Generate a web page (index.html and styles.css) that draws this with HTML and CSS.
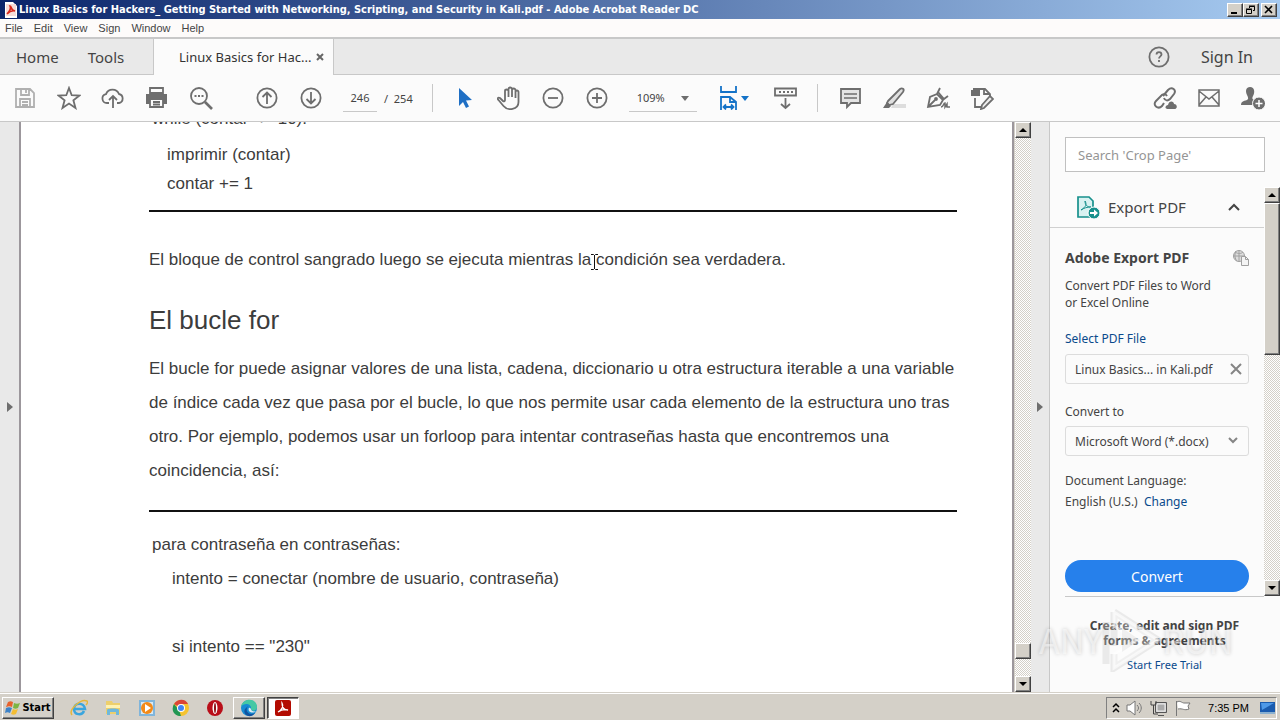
FILE: index.html
```html
<!DOCTYPE html>
<html lang="en">
    <head>
        <meta charset="utf-8">
        <title>Linux Basics for Hackers - Adobe Acrobat Reader DC</title>
        <link rel="stylesheet" href="styles.css">
    </head>
    <body>
        <header class="titlebar">
            <svg class="app-icon" width="12" height="16" viewBox="0 0 12 16"><path d="M0 0h8l4 4v12H0z" fill="#fff"/><path d="M1 2h10v12H1z" fill="#f6dcd8"/><path d="M2 12C5 9 6 6 5 4c2 0 0 4 5 5-3-1-5 0-8 3z" fill="none" stroke="#d8281c" stroke-width="1.6"/></svg>
            <h1>Linux Basics for Hackers_ Getting Started with Networking, Scripting, and Security in Kali.pdf - Adobe Acrobat Reader DC</h1>
            <div class="window-buttons">
                <button class="bevel" aria-label="Minimize"><svg width="12" height="10"><path d="M2 7h6v2H2z"/></svg></button>
                <button class="bevel" aria-label="Restore"><svg width="12" height="10"><path d="M4.500 3V1.500h5v4H8M4 1h6M1.500 4.500h5v4h-5zM1 4h6" fill="none" stroke="#000"/></svg></button>
                <button class="bevel close" aria-label="Close"><svg width="12" height="10"><path d="M2 1l7 7M9 1L2 8" stroke="#000" stroke-width="1.600"/></svg></button>
            </div>
        </header>

        <nav class="menubar">
            <button>File</button>
            <button>Edit</button>
            <button>View</button>
            <button>Sign</button>
            <button>Window</button>
            <button>Help</button>
        </nav>

        <div class="tabs">
            <div class="tabs-left">
                <button>Home</button>
                <button>Tools</button>
            </div>
            <div class="tab-active">
                <span>Linux Basics for Hac...</span>
                <button aria-label="Close tab"><svg width="8" height="8" viewBox="0 0 8 8"><path d="M1 1l6 6M7 1L1 7" stroke="#666" stroke-width="2"/></svg></button>
            </div>
            <div class="tabs-right">
                <button aria-label="Help"><svg width="22" height="22" viewBox="0 0 22 22" fill="none" stroke="#6e6e6e" stroke-width="1.800"><circle cx="11" cy="11" r="9.600"/><path d="M8.500 8.500c0-3.300 5-3.300 5 0 0 1.800-2.500 2-2.500 4M11 14v2"/></svg></button>
                <button class="sign-in">Sign In</button>
            </div>
        </div>

        <div class="toolbar">
            <div class="tools">
                <button aria-label="Save"><svg class="faded" viewBox="0 0 24 24"><path d="M3 3h14l4 4v14H3zM8 3v6h8V3M13 4v3M7 21v-8h10v8M9 16h6M9 19h6"/></svg></button>
                <button aria-label="Star"><svg viewBox="0 0 24 24"><path d="M12 2l2.700 7.200 7.800.3-6.100 4.800 2.100 7.700-6.500-4.400L5.500 22l2.100-7.700L1.500 9.500l7.800-.3z"/></svg></button>
                <button aria-label="Upload"><svg viewBox="0 0 24 24"><path d="M8 17H6a4.500 4.500 0 0 1-1-8.900A7 7 0 0 1 18 8a4.600 4.600 0 0 1 0 9h-2M12 22V11M8 14l4-4 4 4"/></svg></button>
                <button aria-label="Print"><svg viewBox="0 0 24 24"><path d="M5 2h13v5H5z" fill="#fbfbfb"/><path d="M1 8h21v10h-4v-4H5v4H1z" fill="#6e6e6e" stroke="none"/><path d="M5 13h13v8H5zM8 16h7M8 18.500h7" fill="#fbfbfb"/></svg></button>
                <button aria-label="Find"><svg viewBox="0 0 24 24"><circle cx="10" cy="10" r="8"/><path d="M16 16l7 7" stroke-width="2.600"/><path d="M5.500 10h2m1.500 0h2m1.500 0h2"/></svg></button>
            </div>
            <div class="tools pages">
                <button aria-label="Previous page"><svg viewBox="0 0 24 24"><circle cx="12" cy="12" r="9.600"/><path d="M12 18V7M7.500 11L12 6.500l4.500 4.500"/></svg></button>
                <button aria-label="Next page"><svg viewBox="0 0 24 24"><circle cx="12" cy="12" r="9.600"/><path d="M12 6v11M7.500 13l4.500 4.500 4.500-4.500"/></svg></button>
                <input class="page-number" type="text" value="246" aria-label="Page number">
                <span>/&nbsp; 254</span>
            </div>
            <div class="tools view">
                <button aria-label="Select"><svg viewBox="0 0 24 24"><path d="M6 2l13 12-6 .5 3 6-3 1.500-3-6-4 4z" fill="#1f6fc4" stroke="none"/></svg></button>
                <button aria-label="Hand"><svg viewBox="0 0 24 24" stroke-width="1.500"><path d="M6 15L3 12c-2-1-3 .5-1.500 2l5 6c4 5 15 4 15-4V6c0-2-3-2-3 0v6V4c0-2-3.500-2-3.500 0v7V3c0-2-3.500-2-3.500 0v8V5c0-2-3.500-2-3.500 0v9c0 1-1 2-2 1"/></svg></button>
                <button aria-label="Zoom out"><svg viewBox="0 0 24 24"><circle cx="12" cy="12" r="9.600"/><path d="M7 12h10"/></svg></button>
                <button aria-label="Zoom in"><svg viewBox="0 0 24 24"><circle cx="12" cy="12" r="9.600"/><path d="M7 12h10M12 7v10"/></svg></button>
                <div class="zoom">
                    <select aria-label="Zoom"><option>109%</option></select>
                    <svg class="caret" viewBox="0 0 8 5"><path d="M0 0h8L4 5z"/></svg>
                </div>
                <button class="fit" aria-label="Fit width">
                    <svg class="blue" viewBox="0 0 24 24"><path d="M4 0v6h15V0M4 24V11h9l6 5v8M13 11v5h6M7 21h9M9 18.500L6.500 21 9 23.500M14 18.500l2.500 2.500-2.500 2.500"/></svg>
                    <svg class="caret blue-caret" viewBox="0 0 8 5"><path d="M0 0h8L4 5z"/></svg>
                </button>
                <button aria-label="Keyboard"><svg viewBox="0 0 24 24"><path d="M2 2.500h21v7H2zM12.500 12v10M8 18l4.500 4 4.500-4"/><path d="M6 6h14" stroke-dasharray="2 2"/></svg></button>
            </div>
            <div class="tools comments">
                <button aria-label="Comment"><svg viewBox="0 0 24 24"><path d="M3 3h19v14h-9l-4 4v-4H3z" fill="#e4e4e4"/><path d="M6 8h13M6 12h13" stroke-width="1.300"/></svg></button>
                <button aria-label="Highlight"><svg viewBox="0 0 24 24"><path d="M11 18h13v4H9z" fill="#ddd" stroke="none"/><path d="M6 15L18 3c2-1.500 5 0 3 3L11 18l-4 1-2-2z" fill="#e0e0e0"/><path d="M5 16l4 4-2 2H1z" fill="#6e6e6e" stroke="none"/></svg></button>
                <button aria-label="Sign"><svg viewBox="0 0 24 24"><path d="M2 21L4 11l7-3 6 6-3 5zM11 8l3-6M12 6l6 7 4-3M2 21l7-7"/><circle cx="10" cy="13" r="1"/><path d="M15 21c3 0 2-4 4-4v4l2-3v3h3" stroke-width="1.500"/></svg></button>
                <button aria-label="Edit page"><svg viewBox="0 0 24 24"><path d="M1 4h2V2h7v8H1z" fill="#6e6e6e" stroke="none"/><path d="M5 12v9h6M10 3h5l5 5v2M14 3v5h6"/><path d="M12 19l8-9 3 3-9 9-3 1z" fill="#eee"/></svg></button>
            </div>
            <div class="tools share">
                <button aria-label="Share link"><svg viewBox="0 0 24 24"><path d="M10 10l5-6c4-4 9 0 6 4l-4 5c-2 2-5 2-6-1M14 10c-2-3-5-2-6 0l-5 5c-4 4 2 9 6 5l2-3" stroke-width="2"/><path d="M14 23c-3-1-1-4 1-4 1-5 6-4 6-1 3 0 4 4 1 5z" fill="#6e6e6e" stroke="none"/></svg></button>
                <button aria-label="Email"><svg viewBox="0 0 24 24"><path d="M2 4h20v16H2zM2 5l10 8 10-8M2 19l7-8M22 19l-7-8" stroke-width="1.500"/></svg></button>
                <button aria-label="Add person"><svg viewBox="0 0 24 24"><path d="M9 1c5 0 5 6 3 9-1 2-1 3 1 4l1 5H0c0-3 2-4 6-5 2-1 1-3 0-5-2-4-1-8 3-8z" fill="#6e6e6e" stroke="none"/><circle cx="18" cy="17.500" r="6.500" fill="#6e6e6e" stroke="#fbfbfb" stroke-width="1"/><path d="M14.500 17.500h7M18 14v7" stroke="#fff" stroke-width="1.500"/></svg></button>
            </div>
        </div>

        <main class="workspace">
            <button class="side-strip left" aria-label="Show navigation pane"><svg width="6" height="10"><path d="M0 0l6 5-6 5z" fill="#6e6e6e"/></svg></button>
            <article class="document">
                <div class="code code-first">
                    <p class="cut">while (contar &lt;= 10):</p>
                    <p>imprimir (contar)</p>
                    <p>contar += 1</p>
                </div>
                <p class="text">El bloque de control sangrado luego se ejecuta mientras la condición sea verdadera.</p>
                <h2>El bucle for</h2>
                <p class="text">El bucle for puede asignar valores de una lista, cadena, diccionario u otra estructura iterable a una variable<br>
                de índice cada vez que pasa por el bucle, lo que nos permite usar cada elemento de la estructura uno tras<br>
                otro. Por ejemplo, podemos usar un forloop para intentar contraseñas hasta que encontremos una<br>
                coincidencia, así:</p>
                <div class="code code-second">
                    <p class="outer">para contraseña en contraseñas:</p>
                    <p>intento = conectar (nombre de usuario, contraseña)</p>
                    <p>&nbsp;</p>
                    <p>si intento == "230"</p>
                </div>
                <svg class="cursor" width="9" height="16" viewBox="0 0 9 16"><path d="M1 .5h2.500l1 1 1-1H8M4.500 1v14M1 15.500h2.500l1-1 1 1H8" fill="none" stroke="#111"/></svg>
            </article>
            <div class="scrollbar doc-scroll">
                <button class="bevel" aria-label="Scroll up"><svg width="8" height="4"><path d="M0 4l4-4 4 4z"/></svg></button>
                <div class="track"></div>
                <div class="bevel thumb"></div>
                <div class="track-end"></div>
                <button class="bevel" aria-label="Scroll down"><svg width="8" height="4"><path d="M0 0h8L4 4z"/></svg></button>
            </div>
            <button class="side-strip right" aria-label="Hide tools pane"><svg width="6" height="10"><path d="M0 0l6 5-6 5z" fill="#6e6e6e"/></svg></button>

            <aside class="panel">
                <input class="search" type="text" placeholder="Search 'Crop Page'" aria-label="Search tools">
                <div class="panel-body">
                    <div class="panel-content">
                        <button class="export-head">
                            <svg width="24" height="24" viewBox="0 0 24 24"><path d="M2 2h11l4 4v16H2z" fill="#d9f2f1" stroke="#17908c" stroke-width="1.700"/><path d="M5 15c5-3 6-6 4-9 0 4 2 6 6 6-4 0-7 1-10 3z" fill="none" stroke="#17908c"/><circle cx="18" cy="18" r="6" fill="#17908c" stroke="#fff"/><path d="M14 17h4v-2.500l4 3.500-4 3.500V19h-4z" fill="#fff"/></svg>
                            <span>Export PDF</span>
                            <svg width="12" height="8" viewBox="0 0 12 8"><path d="M1 7l5-5 5 5" fill="none" stroke="#444" stroke-width="2"/></svg>
                        </button>
                        <div class="export">
                            <h3>Adobe Export PDF
                                <svg width="16" height="16" viewBox="0 0 16 16" fill="none" stroke="#a0a0a0"><circle cx="6" cy="6" r="5.500" fill="#ddd"/><path d="M6 0v12M0 6h12M2 2c3 2 6 2 8 0M3 1c-2 4-1 8 1 10"/><path d="M8.500 6.500h4l3 3v6h-7z" fill="#f4f4f4"/><path d="M12.500 6.500v3h3"/></svg>
                            </h3>
                            <p class="about">Convert PDF Files to Word<br>or Excel Online</p>
                            <a href="#">Select PDF File</a>
                            <div class="file">
                                <span>Linux Basics... in Kali.pdf</span>
                                <button aria-label="Remove file"><svg width="12" height="12"><path d="M1 1l10 10M11 1L1 11" stroke="#858585" stroke-width="2"/></svg></button>
                            </div>
                            <label for="format">Convert to</label>
                            <div class="format">
                                <select id="format"><option>Microsoft Word (*.docx)</option></select>
                                <svg width="10" height="7"><path d="M1 1l4 4 4-4" fill="none" stroke="#858585" stroke-width="2"/></svg>
                            </div>
                            <p class="language">Document Language:<br>English (U.S.) &nbsp;<a href="#">Change</a></p>
                            <button class="convert">Convert</button>
                        </div>
                    </div>
                    <div class="scrollbar">
                        <button class="bevel" aria-label="Scroll up"><svg width="8" height="4"><path d="M0 4l4-4 4 4z"/></svg></button>
                        <div class="bevel thumb"></div>
                        <div class="track"></div>
                        <button class="bevel" aria-label="Scroll down"><svg width="8" height="4"><path d="M0 0h8L4 4z"/></svg></button>
                    </div>
                </div>
                <div class="trial">
                    <strong>Create, edit and sign PDF<br>forms &amp; agreements</strong>
                    <a href="#">Start Free Trial</a>
                </div>
                <div class="watermark">
                    <span>ANY</span>
                    <svg width="60" height="64" viewBox="0 0 60 64"><path d="M12 4l44 28-44 28V46M12 38V4M4 14v42" fill="none" stroke="#ccc" stroke-width="7" stroke-opacity=".35"/><path d="M12 4l44 28-44 28V46l22-14-22-14z" fill="#fff" fill-opacity=".3" stroke="#fff" stroke-width="3" stroke-opacity=".6"/><path d="M20 20l18 12-18 12z" fill="#ddd" fill-opacity=".4"/></svg>
                    <span>RUN</span>
                </div>
            </aside>
        </main>

        <footer class="taskbar">
            <button class="bevel start">
                <svg width="16" height="16" viewBox="0 0 16 16"><path d="M3 2c2-1 3-1 5 0L7 7C5 6 4 6 1 7z" fill="#e8622c"/><path d="M9 3c2 1 4 1 6 0l-2 5c-2 1-3 1-5 0z" fill="#7db542"/><path d="M1 8c2-1 4-1 6 0l-2 5c-2-1-3-1-5 0z" fill="#3c82c8"/><path d="M8 9c2 1 3 1 5 0l-2 5c-2 1-3 1-5 0z" fill="#f4bd32"/></svg>
                Start
            </button>
            <div class="quick">
                <button aria-label="Internet Explorer"><svg width="18" height="18" viewBox="0 0 18 18" fill="none"><path d="M14 12c-2 5-10 4-10-2 0-7 10-7 11 0H5" stroke="#39a5de" stroke-width="2.500"/><path d="M2 16C-2 11 11-1 17 2c1 1 0 3-1 4" stroke="#e5b73b" stroke-width="1.500"/></svg></button>
                <button aria-label="Explorer"><svg width="18" height="18" viewBox="0 0 18 18"><path d="M2 2h6l1 2h7v11H2z" fill="#edcf6c"/><path d="M2 6h14v3H2z" fill="#fff2b0"/><path d="M3 16v-5c0-2 12-2 12 0v5h-3v-3H6v3z" fill="#70b8db"/></svg></button>
                <button aria-label="Media Player"><svg width="18" height="18" viewBox="0 0 18 18"><path d="M1 1h16v16H1z" fill="#80b5db"/><path d="M3 3h12v12H3z" fill="#d8e9f4"/><circle cx="9" cy="9" r="6" fill="#f28a19"/><path d="M7 5l6 4-6 4z" fill="#fff"/></svg></button>
                <button aria-label="Chrome"><svg width="18" height="18" viewBox="0 0 18 18"><circle cx="9" cy="9" r="8" fill="#f5c330"/><path d="M9 9L2 5c4-6 12-5 14 0H9z" fill="#db4437"/><path d="M2 5l5 6 2 6C1 17-1 10 2 5z" fill="#219653"/><circle cx="9" cy="9" r="4" fill="#fff"/><circle cx="9" cy="9" r="3" fill="#4285f4"/></svg></button>
                <button aria-label="Opera"><svg width="18" height="18" viewBox="0 0 18 18"><circle cx="9" cy="9" r="8" fill="#b90e19"/><ellipse cx="9" cy="9" rx="2.500" ry="6" fill="#fff"/><ellipse cx="9" cy="9" rx="1" ry="5" fill="#8e1419"/></svg></button>
            </div>
            <button class="bevel task" aria-label="Edge"><svg width="18" height="18" viewBox="0 0 18 18"><circle cx="9" cy="9" r="8" fill="#168bd2"/><path d="M1 8C3-2 17-1 17 8c0 4-5 5-6 2 1-5-7-7-10-2z" fill="#45c8a4"/><path d="M8 7c-4 6 2 10 7 7-5 7-13 1-10-4z" fill="#10539f"/><path d="M11 10c-2-3-3 0-2 2 2 2 5 2 7 0-2 1-5 0-5-2z" fill="#dcecf2"/></svg></button>
            <button class="bevel task active" aria-label="Acrobat Reader"><svg width="18" height="18" viewBox="0 0 18 18"><rect x="1" y="1" width="16" height="16" rx="2" fill="#b30b00"/><path d="M4 13c4-2 6-6 4-9 0 5 2 7 6 7-4-1-7 0-10 2z" fill="none" stroke="#fff" stroke-width="1.300"/></svg></button>
            <div class="tray">
                <svg width="8" height="12" viewBox="0 0 8 12"><path d="M1 5l3-3 3 3M1 10l3-3 3 3" fill="none" stroke="#000" stroke-width="1.500"/></svg>
                <svg width="18" height="16" viewBox="0 0 18 16" fill="none" stroke="#777"><path d="M1 5h3l5-4v14l-5-4H1z" fill="#fff"/><path d="M11 5c2 2 2 4 0 6M13 3c3 3 3 7 0 10"/></svg>
                <svg width="18" height="16" viewBox="0 0 18 16" fill="none" stroke="#555"><path d="M5.500 2.500h11v10h-11zM8 15.500h6" fill="#ccc"/><path d="M1 1v4h5V1M3.500 5v9H8" stroke="#444"/><path d="M7 4h8v7H7z" fill="#aaa" stroke="#eee"/></svg>
                <svg width="18" height="16" viewBox="0 0 18 16"><path d="M2.500 1v15M3 2c3-2 5 1 7 1l6 0-2 3 1 3c-5 2-6-1-11 0" fill="#fff" stroke="#777"/></svg>
                <time>7:35 PM</time>
                <svg width="16" height="14" viewBox="0 0 16 14"><path d="M1 1h15v10H1z" fill="#1a5bae"/><path d="M2 2h13L3 9z" fill="#4e99e8"/><path d="M1 11h15v2H1z" fill="#8ab0d0"/></svg>
            </div>
        </footer>
    </body>
</html>
```

FILE: styles.css
```css
* {
    box-sizing: border-box;
}

body {
    display: flex;
    flex-direction: column;
    height: 100vh;
    margin: 0;
    overflow: hidden;
    background-color: #fbfbfb;
    color: #444;
    font-family: "Noto Sans", "Open Sans", sans-serif;
    font-size: 12px;
}
button, input, select {
    font: inherit;
    color: inherit;
    margin: 0;
    padding: 0;
    border: 0;
    background: none;
}
svg {
    display: block;
    flex: none;
}
a {
    color: #0a4a8c;
    text-decoration: none;
}
h1, h2, h3, p {
    margin: 0;
}

/* raised grey classic buttons */
.bevel {
    display: flex;
    align-items: center;
    justify-content: center;
    background-color: #d4d0c8;
    border: 1px solid;
    border-color: #fff #404040 #404040 #fff;
    box-shadow: inset -1px -1px #808080;
}

.titlebar {
    display: flex;
    align-items: center;
    flex: none;
    height: 19px;
    padding: 0 3px 0 5px;
    background: linear-gradient(to right, #0a246a, #a6caf0);
}
.titlebar h1 {
    flex: 1;
    margin-left: 2px;
    color: #fff;
    font-family: "DejaVu Sans Condensed", "DejaVu Sans", sans-serif;
    font-size: 11px;
    font-weight: bold;
    white-space: nowrap;
}
.window-buttons {
    display: flex;
}
.window-buttons .bevel {
    width: 16px;
    height: 14px;
}
.window-buttons .close {
    margin-left: 2px;
}

.menubar {
    display: flex;
    flex: none;
    gap: 11px;
    height: 20px;
    padding-left: 5px;
    background-color: #fdfbfa;
    border-bottom: 2px solid #c8c8c8;
    font-family: "Liberation Sans", Arial, sans-serif;
    font-size: 11px;
}

.tabs {
    display: flex;
    flex: none;
    height: 36px;
    font-size: 15px;
}
.tabs-left, .tabs-right {
    display: flex;
    align-items: center;
    background-color: #e9e9e9;
    border-bottom: 1px solid #c8c8c8;
}
.tabs-left {
    width: 154px;
    gap: 29px;
    padding-left: 16px;
    border-right: 1px solid #c8c8c8;
}
.tabs-right {
    flex: 1;
    justify-content: flex-end;
    gap: 31px;
    padding-right: 27px;
    border-left: 1px solid #c8c8c8;
}
.sign-in {
    font-size: 16px;
}
.tab-active {
    display: flex;
    align-items: center;
    justify-content: space-between;
    width: 179px;
    padding: 0 9px 0 25px;
    color: #333;
    font-size: 13px;
}

.toolbar {
    display: flex;
    flex: none;
    align-items: center;
    height: 47px;
    padding: 0 5px 0 3px;
    border-bottom: 1px solid #c8c8c8;
    font-size: 11px;
}
.tools {
    display: flex;
    align-items: center;
    height: 28px;
}
.tools button {
    display: flex;
    align-items: center;
    justify-content: center;
    width: 44px;
    height: 28px;
}
.tools button svg {
    width: 24px;
    height: 24px;
    fill: none;
    stroke: #6e6e6e;
    stroke-width: 1.8;
}
.tools button .faded {
    stroke: #b0b0b0;
}
.tools button .blue {
    stroke: #1473c8;
}
.tools .caret,
.tools button .caret {
    width: 8px;
    height: 5px;
    fill: #6e6e6e;
    stroke: none;
}
.tools button .blue-caret {
    fill: #1473c8;
}
.pages {
    margin-left: 22px;
}
.page-number {
    width: 34px;
    height: 28px;
    margin: 0 7px 0 10px;
    border-bottom: 1px solid #c8c8c8;
    text-align: center;
}
.view, .comments {
    padding-left: 10px;
    border-left: 1px solid #c8c8c8;
}
.view {
    margin-left: 19px;
}
.comments {
    margin-left: 10px;
}
.share {
    margin-left: auto;
}
.zoom {
    position: relative;
    width: 68px;
    margin: 0 20px 0 10px;
}
.zoom select {
    width: 100%;
    height: 28px;
    padding-left: 8px;
    border-bottom: 1px solid #c8c8c8;
    appearance: none;
}
.zoom .caret {
    position: absolute;
    top: 12px;
    right: 8px;
    pointer-events: none;
}
.tools .fit {
    width: 33px;
    margin-right: 13px;
}

.workspace {
    display: flex;
    flex: 1;
    min-height: 0;
}
.side-strip {
    display: flex;
    align-items: center;
    justify-content: center;
    width: 19px;
    background-color: #e9e9e9;
}
.side-strip.right {
    border-right: 1px solid #c8c8c8;
}
.document {
    position: relative;
    flex: 1;
    min-width: 0;
    overflow: hidden;
    padding: 0 55px 0 128px;
    background-color: #fff;
    border: solid #9c979c;
    border-width: 0 2px;
    color: #3c3c3c;
    font-family: "Liberation Sans", Arial, sans-serif;
    font-size: 17px;
    line-height: 34px;
    white-space: nowrap;
}
.document h2 {
    margin: 26px 0 15px;
    font-size: 26px;
    font-weight: normal;
}
.code-first {
    padding: 0 0 12px 18px;
    border-bottom: 2px solid #111;
    line-height: 29px;
    margin-bottom: 31px;
}
.code-first .cut {
    margin: -18px 0 7px -15px;
}
.code-second {
    margin-top: 22px;
    padding: 16px 0 0 23px;
    border-top: 2px solid #111;
}
.code-second .outer {
    margin-left: -20px;
}
.cursor {
    position: absolute;
    top: 132px;
    left: 569px;
}

.scrollbar {
    display: flex;
    flex-direction: column;
    flex: none;
    width: 16px;
    background: repeating-conic-gradient(#d4d0c8 0 25%, #fff 0 50%) 0 0 / 2px 2px;
}
.scrollbar .bevel {
    flex: none;
    height: 16px;
}
.scrollbar .track {
    flex: 1;
}
.track-end {
    height: 17px;
}
.doc-scroll {
    width: 17px;
    border-left: 1px solid #d4d0c8;
}

.panel {
    position: relative;
    display: flex;
    flex-direction: column;
    width: 230px;
    background-color: #fbfbfb;
}
.search {
    flex: none;
    height: 35px;
    margin: 15px 15px 15px 15px;
    padding-left: 12px;
    background-color: #fff;
    border: 1px solid #c0c0c0;
    font-size: 13px;
}
.search::placeholder {
    color: #959595;
    opacity: 1;
}
.panel-body {
    display: flex;
    flex: none;
    height: 409px;
}
.panel-content {
    flex: 1;
}
.panel-body .thumb {
    height: 152px;
}
.export-head {
    display: flex;
    align-items: center;
    width: 100%;
    height: 41px;
    padding: 0 24px 0 26px;
    border-bottom: 1px solid #d0d0d0;
    font-size: 15px;
}
.export-head span {
    flex: 1;
    margin-left: 8px;
    text-align: left;
}
.export {
    padding: 20px 15px 0;
    line-height: 17px;
}
.export h3 {
    display: flex;
    justify-content: space-between;
    align-items: center;
    line-height: 20px;
    font-size: 14px;
}
.about {
    margin: 9px 0 19px;
}
.file, .format {
    display: flex;
    align-items: center;
    height: 30px;
    border: 1px solid #dcdcdc;
    border-radius: 3px;
}
.file {
    justify-content: space-between;
    margin: 7px 0 19px;
    padding: 0 6px 0 9px;
}
.export label {
    display: block;
    margin-bottom: 6px;
}
.format {
    position: relative;
    margin-bottom: 14px;
}
.format select {
    width: 100%;
    height: 28px;
    padding-left: 9px;
    appearance: none;
}
.format svg {
    position: absolute;
    top: 10px;
    right: 10px;
    pointer-events: none;
}
.language {
    line-height: 21px;
}
.convert {
    width: 100%;
    height: 32px;
    margin-top: 48px;
    background-color: #2680eb;
    border-radius: 16px;
    color: #fff;
    font-size: 14px;
}
.trial {
    margin: 0 16px 0 15px;
    padding-top: 21px;
    border-top: 1px solid #c8c8c8;
    line-height: 15px;
    text-align: center;
}
.trial strong {
    display: block;
    margin-bottom: 9px;
}
.trial a {
    font-size: 11px;
}
.watermark {
    position: absolute;
    right: 47px;
    bottom: 20px;
    display: flex;
    align-items: center;
    color: rgba(255, 255, 255, 0.5);
    font-family: "Noto Sans CJK JP", "Liberation Sans", sans-serif;
    font-size: 34px;
    line-height: 64px;
    text-shadow: 0 0 4px rgba(0, 0, 0, 0.2);
    pointer-events: none;
}

.taskbar {
    display: flex;
    flex: none;
    align-items: center;
    height: 28px;
    padding: 2px 3px 0 2px;
    background-color: #d4d0c8;
    border-top: 1px solid #d4d0c8;
    box-shadow: inset 0 1px #fff;
    color: #000;
}
.start {
    gap: 1px;
    width: 52px;
    height: 22px;
    font-family: "DejaVu Sans Condensed", "DejaVu Sans", sans-serif;
    font-size: 11px;
    font-weight: bold;
}
.quick {
    display: flex;
    gap: 16px;
    margin: 0 9px 0 16px;
}
.task {
    width: 32px;
    height: 22px;
    margin-right: 2px;
}
.task.active {
    background-color: #fff;
    border-color: #404040 #fff #fff #404040;
    box-shadow: inset 1px 1px #808080;
}
.tray {
    display: flex;
    align-items: center;
    gap: 6px;
    height: 22px;
    margin-left: auto;
    padding: 0 1px 0 5px;
    border: 1px solid;
    border-color: #808080 #fff #fff #808080;
    font-size: 11px;
}
.tray time {
    margin: 0 4px 0 10px;
    font-family: "Liberation Sans", Arial, sans-serif;
}
```
